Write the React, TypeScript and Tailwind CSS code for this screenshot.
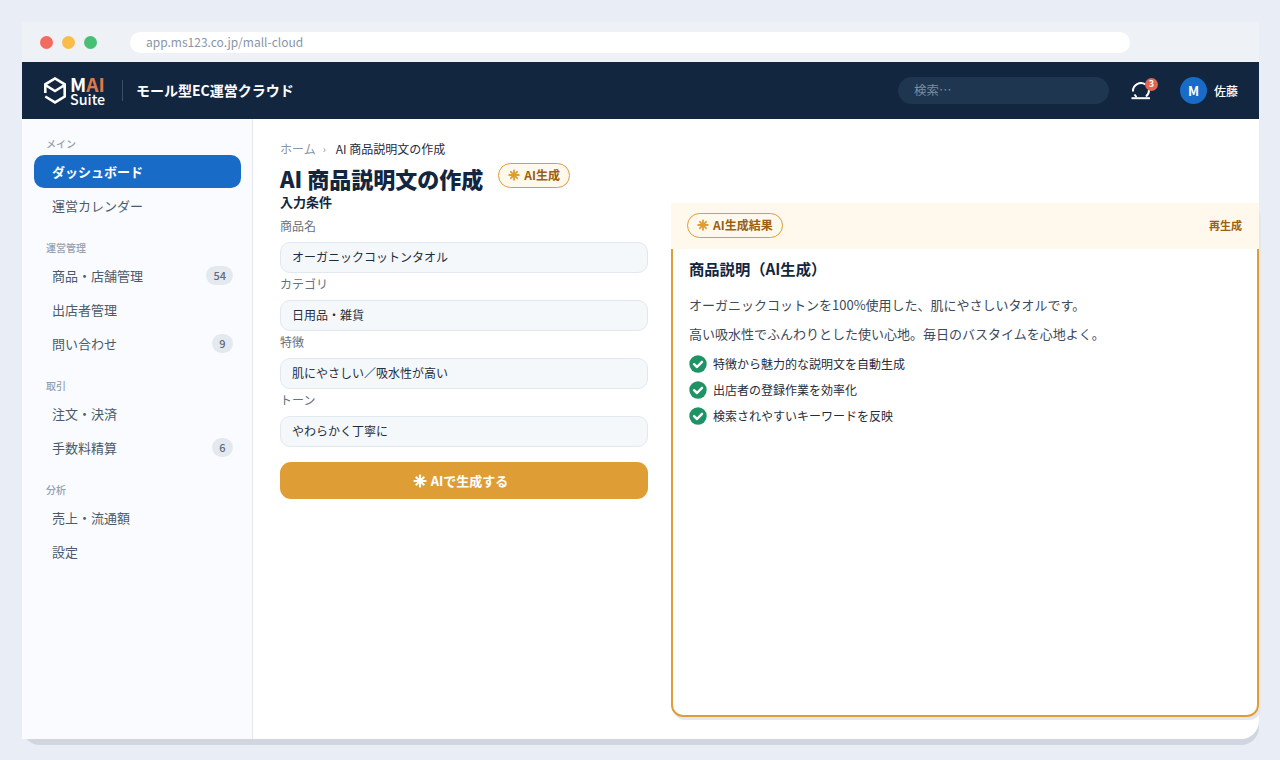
const F = "font-['Noto_Sans_CJK_JP','Noto_Sans',sans-serif]";

function Spark({ className }: { className: string }) {
  return (
    <svg viewBox="0 0 16 16" className={className} fill="currentColor">
      <rect x="6.8" y="0.5" width="2.4" height="15" rx="0.8" />
      <rect x="0.5" y="6.8" width="15" height="2.4" rx="0.8" />
      <rect x="6.8" y="1" width="2.4" height="14" rx="0.8" transform="rotate(45 8 8)" />
      <rect x="6.8" y="1" width="2.4" height="14" rx="0.8" transform="rotate(-45 8 8)" />
    </svg>
  );
}

function Logo() {
  return (
    <svg viewBox="0 0 22 27" className="h-[27px] w-[22px]" fill="none" stroke="#fff" strokeWidth="2.6">
      <path d="M1.3 16V7.3L11 1.5l9.7 5.8v4" />
      <path d="M1.3 19.5 11 25.4l9.7-5.9V10" />
      <path d="M1.3 8 11 14l9.7-6" />
    </svg>
  );
}

function Check() {
  return (
    <svg viewBox="0 0 18 18" className="h-[18px] w-[18px] shrink-0">
      <circle cx="9" cy="9" r="8.7" fill="#1f9364" />
      <path d="M5 9.2 8 12l5-5.2" fill="none" stroke="#fff" strokeWidth="2.4" strokeLinecap="round" strokeLinejoin="round" />
    </svg>
  );
}

function NavItem({ label, badge, active }: { label: string; badge?: string; active?: boolean }) {
  return (
    <div
      className={
        active
          ? "flex h-[33px] items-center rounded-[10px] bg-[#186cc8] px-[18px] text-[13px] font-bold text-white"
          : "flex h-[33px] items-center justify-between rounded-[10px] pl-[18px] pr-2 text-[13px] text-[#4b5a6b]"
      }
    >
      <span>{label}</span>
      {badge && (
        <span className="flex h-[19px] min-w-[21px] items-center justify-center rounded-full bg-[#e4e9f0] px-[7px] text-[11px] font-medium text-[#5d6b7c]">
          {badge}
        </span>
      )}
    </div>
  );
}

function NavGroup({ title, children, first }: { title: string; children: React.ReactNode; first?: boolean }) {
  return (
    <div className={first ? "" : "mt-[18px]"}>
      <div className="pl-3 text-[10px] leading-[16px] font-medium text-[#94a0ae]">{title}</div>
      <div className="mt-[3px] flex flex-col gap-[1px]">{children}</div>
    </div>
  );
}

function Field({ label, value }: { label: string; value: string }) {
  return (
    <div>
      <div className="text-[12px] leading-[18px] text-[#66727f]">{label}</div>
      <div className="mt-[7px] flex h-[31px] items-center rounded-[10px] border border-[#e2e8f0] bg-[#f5f8fb] px-[11px] pb-[2px] text-[12px] text-[#1f2c3b]">
        {value}
      </div>
    </div>
  );
}

export default function App() {
  return (
    <div className={`${F} h-[760px] w-[1280px] overflow-hidden bg-[#e9eef6] pt-[22px] pl-[22px]`}>
      <div className="flex h-[717px] w-[1237px] flex-col rounded-br-[18px] rounded-bl-[18px] bg-white shadow-[0_6px_0_#cfd6df]">
        <div className="flex h-[40px] shrink-0 items-center bg-[#eef1f6] pl-[18px]">
          <div className="flex gap-[9px]">
            <span className="h-[13px] w-[13px] rounded-full bg-[#f26b5e]" />
            <span className="h-[13px] w-[13px] rounded-full bg-[#fabd4b]" />
            <span className="h-[13px] w-[13px] rounded-full bg-[#47c076]" />
          </div>
          <div className="ml-[33px] flex h-[21px] w-[1000px] items-center rounded-full bg-white pl-4 text-[12px] text-[#8a96a5]">
            app.ms123.co.jp/mall-cloud
          </div>
        </div>
        <div className="flex h-[57px] shrink-0 items-center bg-[#12263f] pl-[22px] text-white">
          <Logo />
          <div className="ml-[4px] flex w-[35px] flex-col items-start">
            <div className="text-[19px] leading-[16px] font-bold">
              M<span className="text-[#e0784a]">AI</span>
            </div>
            <div className="text-[14.3px] leading-[14px] font-medium">Suite</div>
          </div>
          <div className="mr-[13px] ml-[17px] h-[21px] w-px bg-[#3d4f66]" />
          <div className="text-[14px] font-bold">モール型EC運営クラウド</div>
          <div className="ml-auto flex h-[27px] w-[211px] items-center rounded-full bg-[#1e3650] pl-4 text-[12.5px] text-[#7b8ba0]">
            検索…
          </div>
          <div className="relative ml-[22px] h-[20px] w-[20px]">
            <svg viewBox="0 0 20 20" className="h-[20px] w-[20px]" fill="none" stroke="#fff" strokeWidth="2">
              <path d="M2 10.5a8 8 0 0 1 12.5-7" />
              <path d="M18 9a8 8 0 0 1-3 6.5" />
              <path d="M3.5 13.5 5.5 16" />
              <path d="M0.5 17.2h18.5" />
            </svg>
            <span className="absolute -top-[3px] left-[14px] flex h-[13px] w-[13px] items-center justify-center rounded-full bg-[#e2654f] text-[9px] font-bold text-white">
              3
            </span>
          </div>
          <div className="ml-[29px] flex h-[27px] w-[27px] items-center justify-center rounded-full bg-[#186cc8] text-[13px] font-bold">
            M
          </div>
          <div className="mr-[21px] ml-[7px] text-[12px] font-medium">佐藤</div>
        </div>
        <div className="flex min-h-0 flex-1">
          <div className="w-[231px] shrink-0 border-r border-[#e4e8ee] bg-[#f9fbff] pt-[17px] pr-[11px] pl-3">
            <NavGroup first title="メイン">
              <NavItem active label="ダッシュボード" />
              <NavItem label="運営カレンダー" />
            </NavGroup>
            <NavGroup title="運営管理">
              <NavItem label="商品・店舗管理" badge="54" />
              <NavItem label="出店者管理" />
              <NavItem label="問い合わせ" badge="9" />
            </NavGroup>
            <NavGroup title="取引">
              <NavItem label="注文・決済" />
              <NavItem label="手数料精算" badge="6" />
            </NavGroup>
            <NavGroup title="分析">
              <NavItem label="売上・流通額" />
              <NavItem label="設定" />
            </NavGroup>
          </div>
          <div className="min-w-0 flex-1 pt-[21px] pl-[27px]">
            <div className="flex items-center text-[12px] leading-[18px] text-[#8b96a3]">
              <span>ホーム</span>
              <span className="mx-[7px] text-[10px]">›</span>
              <span className="ml-[3px] text-[#1f2c3b]">AI 商品説明文の作成</span>
            </div>
            <div className="mt-[6px] flex h-[29px] items-center">
              <h1 className="text-[22px] leading-[29px] font-extrabold text-[#12263f]">AI 商品説明文の作成</h1>
              <span className="mb-[7px] ml-[15px] flex h-[25px] items-center gap-[4px] rounded-full border border-[#e09c35] bg-[#fff9ed] px-[9px] text-[12px] font-bold text-[#9a5f10]">
                <Spark className="h-[12px] w-[12px] text-[#e09c35]" />
                AI生成
              </span>
            </div>
            <div className="grid grid-cols-[368px_588px] gap-x-[23px]">
              <div>
                <div className="text-[13px] leading-[18px] font-bold text-[#12263f]">入力条件</div>
                <div className="mt-[6px] flex flex-col gap-[2px]">
                  <Field label="商品名" value="オーガニックコットンタオル" />
                  <Field label="カテゴリ" value="日用品・雑貨" />
                  <Field label="特徴" value="肌にやさしい／吸水性が高い" />
                  <Field label="トーン" value="やわらかく丁寧に" />
                </div>
                <div className="mt-[15px] flex h-[37px] items-center justify-center gap-[4px] rounded-[11px] bg-[#df9e35] pr-[7px] text-[13px] font-bold text-white">
                  <Spark className="h-[14px] w-[14px]" />
                  AIで生成する
                </div>
              </div>
              <div className="mt-[10px] h-[514px] rounded-[12px] border-2 border-[#df9e35] shadow-[2px_3px_0_#e4e7ec]">
                <div className="-mx-[2px] -mt-[2px] flex h-[46px] items-center justify-between bg-[#fff9ed] pr-[17px] pb-[2px] pl-[16px]">
                  <span className="flex h-[25px] items-center gap-[4px] rounded-full border border-[#e09c35] px-[9px] text-[12px] font-bold text-[#9a5f10]">
                    <Spark className="h-[12px] w-[12px] text-[#e09c35]" />
                    AI生成結果
                  </span>
                  <span className="text-[11px] font-bold text-[#9a5f10]">再生成</span>
                </div>
                <div className="px-4 pt-[7px]">
                  <div className="text-[15.3px] leading-[24px] font-bold text-[#12263f]">商品説明（AI生成）</div>
                  <div className="mt-[15px] text-[13px] leading-[20px] text-[#3a4a5c]">
                    オーガニックコットンを100%使用した、肌にやさしいタオルです。
                  </div>
                  <div className="mt-[9px] text-[13px] leading-[20px] text-[#3a4a5c]">
                    高い吸水性でふんわりとした使い心地。毎日のバスタイムを心地よく。
                  </div>
                  <div className="mt-[11px] flex flex-col gap-[8px] text-[12px] leading-[18px] text-[#1f2c3b]">
                    <div className="flex items-center gap-[6px]"><Check />特徴から魅力的な説明文を自動生成</div>
                    <div className="flex items-center gap-[6px]"><Check />出店者の登録作業を効率化</div>
                    <div className="flex items-center gap-[6px]"><Check />検索されやすいキーワードを反映</div>
                  </div>
                </div>
              </div>
            </div>
          </div>
        </div>
      </div>
    </div>
  );
}
